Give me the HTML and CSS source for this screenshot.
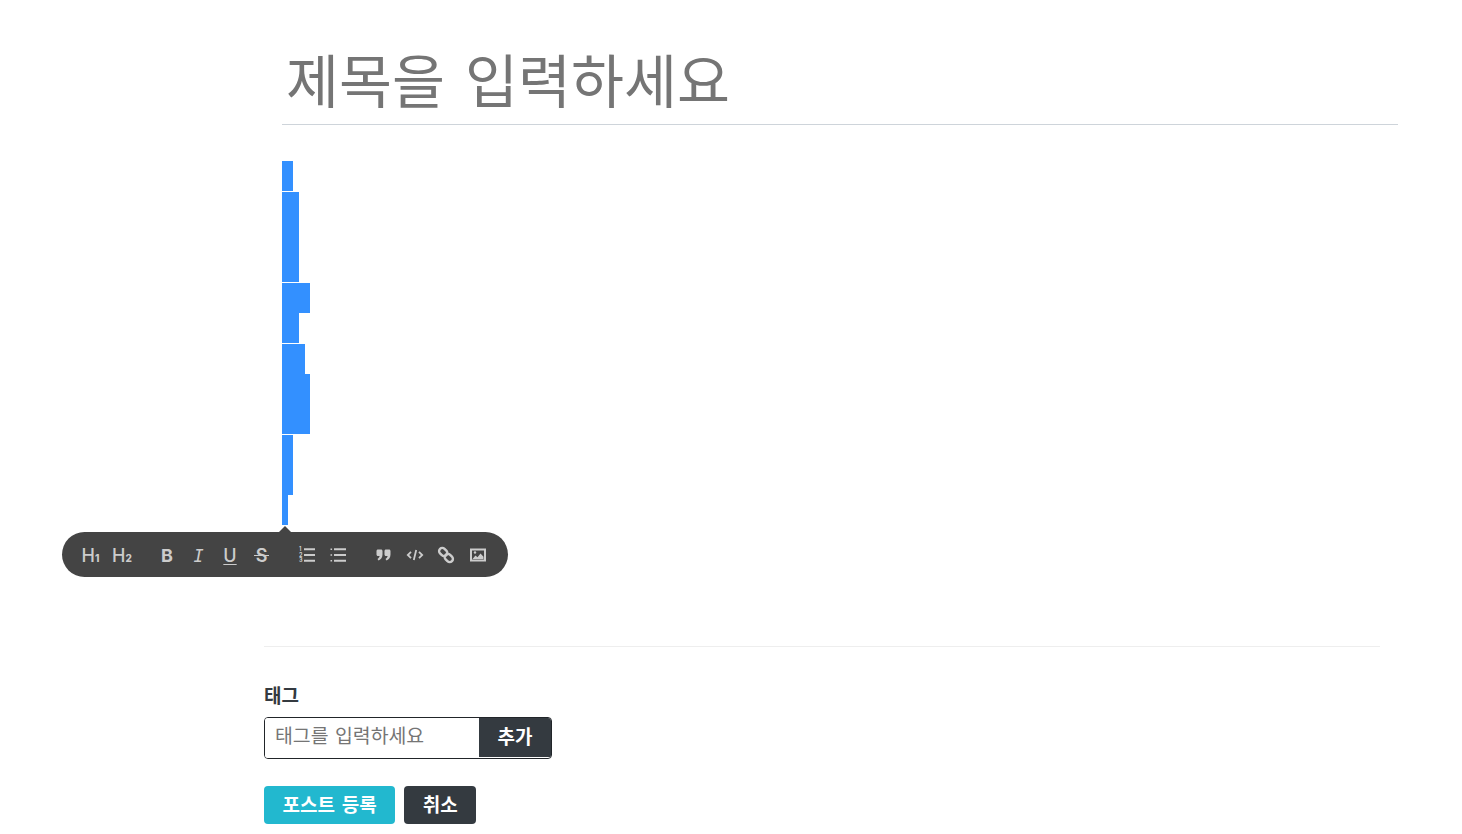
FILE: index.html
```html
<!DOCTYPE html>
<html lang="ko">
<head>
  <meta charset="UTF-8">
  <title>포스트 작성</title>
  <link rel="stylesheet" href="styles.css">
</head>
<body>

  <div class="container">
    <div class="editor">
      <input type="text" class="title-input" placeholder="제목을 입력하세요">

      <div class="content">
        <div class="sel-block">
          <div class="sel w11"></div>
        </div>
        <div class="sel-block">
          <div class="sel w17 tall"></div>
        </div>
        <div class="sel-block">
          <div class="sel w28"></div>
          <div class="sel w17"></div>
        </div>
        <div class="sel-block">
          <div class="sel w23"></div>
          <div class="sel w28 mid"></div>
        </div>
        <div class="sel-block">
          <div class="sel w11 mid"></div>
          <div class="sel w6"></div>
        </div>

        <div class="tooltip">
          <span class="arrow"></span>
          <div class="tool-group">
            <button class="tool head">H<small>1</small></button>
            <button class="tool head">H<small>2</small></button>
          </div>
          <div class="tool-group">
            <button class="tool fmt-b">B</button>
            <button class="tool fmt-i">I</button>
            <button class="tool fmt-u">U</button>
            <button class="tool fmt-s">S</button>
          </div>
          <div class="tool-group">
            <button class="tool">
              <svg viewBox="0 0 18 18" class="ico">
                <path d="M6 3.3h11M6 9h11M6 14.7h11" stroke-width="2"/>
                <text class="num" x="1" y="5">1</text>
                <text class="num" x="1" y="10.6">2</text>
                <text class="num" x="1" y="16.4">3</text>
              </svg>
            </button>
            <button class="tool">
              <svg viewBox="0 0 18 18" class="ico">
                <path d="M5 3.3h12M5 9h12M5 14.7h12" stroke-width="2"/>
                <path d="M1.5 3.3h1.6M1.5 9h1.6M1.5 14.7h1.6" stroke-width="1.6"/>
              </svg>
            </button>
          </div>
          <div class="tool-group">
            <button class="tool">
              <svg viewBox="0 0 18 18" class="ico">
                <path class="solid" d="M4 3.5h3c.9 0 1.5.6 1.5 1.5v3.4c0 2.9-1.5 5-4 6.1l-1-1.5c1.3-.8 2-1.7 2.1-2.9H4c-.9 0-1.5-.6-1.5-1.5V5c0-.9.6-1.5 1.5-1.5zM12 3.5h3c.9 0 1.5.6 1.5 1.5v3.4c0 2.9-1.5 5-4 6.1l-1-1.5c1.3-.8 2-1.7 2.1-2.9H12c-.9 0-1.5-.6-1.5-1.5V5c0-.9.6-1.5 1.5-1.5z"/>
              </svg>
            </button>
            <button class="tool">
              <svg viewBox="0 0 18 18" class="ico">
                <path d="M5 5.8L1.8 9 5 12.2M13 5.8L16.2 9 13 12.2M10.2 4L7.8 14" stroke-width="1.8"/>
              </svg>
            </button>
            <button class="tool">
              <svg viewBox="0 0 18 18" class="ico">
                <rect x="1.7" y="2.8" width="9" height="6.4" rx="3.2" transform="rotate(45 6.2 6)" stroke-width="2.4"/>
                <rect x="7.3" y="8.8" width="9" height="6.4" rx="3.2" transform="rotate(45 11.8 12)" stroke-width="2.4"/>
              </svg>
            </button>
            <button class="tool">
              <svg viewBox="0 0 18 18" class="ico">
                <rect x="2" y="3.5" width="14" height="11" stroke-width="2"/>
                <path class="solid" d="M3.5 13l3-3.4 2 1.6 3-3.6 3 3.2V13z"/>
                <circle class="solid" cx="6" cy="6.5" r="1.2"/>
              </svg>
            </button>
          </div>
        </div>
      </div>
    </div>

    <hr class="divider">

    <label class="tag-label" for="tag">태그</label>
    <div class="tag-box">
      <input type="text" id="tag" placeholder="태그를 입력하세요">
      <button class="btn btn-dark tag-add">추가</button>
    </div>

    <div class="actions">
      <button class="btn btn-teal">포스트 등록</button>
      <button class="btn btn-dark">취소</button>
    </div>
  </div>

</body>
</html>
```

FILE: styles.css
```css
body {
  margin: 0;
  background: #fff;
  color: #343a40;
  font-family: "Noto Sans CJK KR", "Noto Sans", sans-serif;
}
.container {
  width: 1116px;
  margin-left: 264px;
}
.editor {
  margin: 0 -18px 0 18px;
  padding-top: 37px;
}
.title-input {
  display: block;
  width: 100%;
  box-sizing: border-box;
  height: 88px;
  padding: 0 0 6px 4px;
  border: none;
  border-bottom: 1px solid #ced4da;
  font-family: inherit;
  font-size: 57.6px;
  word-spacing: 4px;
  outline: none;
}
.title-input::placeholder {
  color: #757575;
  opacity: 1;
}
.content {
  position: relative;
  display: flex;
  flex-direction: column;
  gap: 1px;
  padding-top: 36px;
  height: 485px;
}
.sel {
  height: 30px;
  background: #3390ff;
}
.sel.tall {
  height: 90px;
}
.sel.mid {
  height: 60px;
}
.w6 { width: 6px; }
.w11 { width: 11px; }
.w17 { width: 17px; }
.w23 { width: 23px; }
.w28 { width: 28px; }

.tooltip {
  position: absolute;
  left: -220px;
  top: 407px;
  display: flex;
  align-items: center;
  gap: 13.5px;
  width: 446px;
  height: 45px;
  box-sizing: border-box;
  padding: 0 12.75px;
  border-radius: 25px;
  background: #444;
}
.arrow {
  position: absolute;
  left: 217px;
  top: -6px;
  border-left: 6px solid transparent;
  border-right: 6px solid transparent;
  border-bottom: 6px solid #444;
}
.tool-group {
  display: flex;
}
.tool {
  position: relative;
  width: 31.5px;
  height: 24px;
  padding: 3px 0;
  border: none;
  background: none;
  color: #ccc;
  font-family: "Inter", sans-serif;
  font-size: 18px;
  font-weight: 500;
  line-height: 20px;
  text-align: center;
}
.tool small {
  font-size: 10px;
  font-weight: 800;
}
.fmt-b { font-weight: 700; }
.fmt-i { font-family: "DejaVu Sans Mono", monospace; font-style: italic; font-size: 17px; }
.fmt-u { text-decoration: underline; text-underline-offset: 2px; text-decoration-thickness: 1px; }
.fmt-s { font-weight: 600; }
.fmt-s::after {
  content: "";
  position: absolute;
  left: 8px;
  top: 12px;
  width: 15px;
  height: 1px;
  background: #ccc;
}
.ico {
  display: block;
  width: 18px;
  height: 18px;
  margin: auto;
  fill: none;
  stroke: #ccc;
}
.ico .solid {
  fill: #ccc;
  stroke: none;
}
.ico .num {
  fill: #ccc;
  stroke: none;
  font-size: 5.5px;
  font-weight: 700;
}

.divider {
  margin: 0;
  border: none;
  border-top: 1px solid #eee;
}
.tag-label {
  display: block;
  margin-top: 35px;
  margin-bottom: 9px;
  font-size: 19px;
  font-weight: 700;
  line-height: 26px;
}
.tag-box {
  display: flex;
  width: 288px;
  height: 42px;
  box-sizing: border-box;
  border: 1px solid #212529;
  border-radius: 4px;
  overflow: hidden;
}
.tag-box input {
  flex: 1;
  min-width: 0;
  padding: 0 10px 8px;
  border: none;
  font-family: inherit;
  font-size: 19.4px;
  word-spacing: 1px;
  outline: none;
}
.tag-box input::placeholder {
  color: #757575;
  opacity: 1;
}
.btn {
  height: 38px;
  padding: 0 18.5px 4px;
  border: none;
  border-radius: 4px;
  color: #fff;
  font-family: inherit;
  font-size: 19px;
  font-weight: 700;
  word-spacing: 1.5px;
}
.btn-dark {
  background: #343a40;
}
.btn-teal {
  background: #22b8cf;
}
.tag-add {
  height: 39px;
  border-radius: 0;
}
.actions {
  display: flex;
  gap: 9px;
  margin-top: 27px;
}
```
